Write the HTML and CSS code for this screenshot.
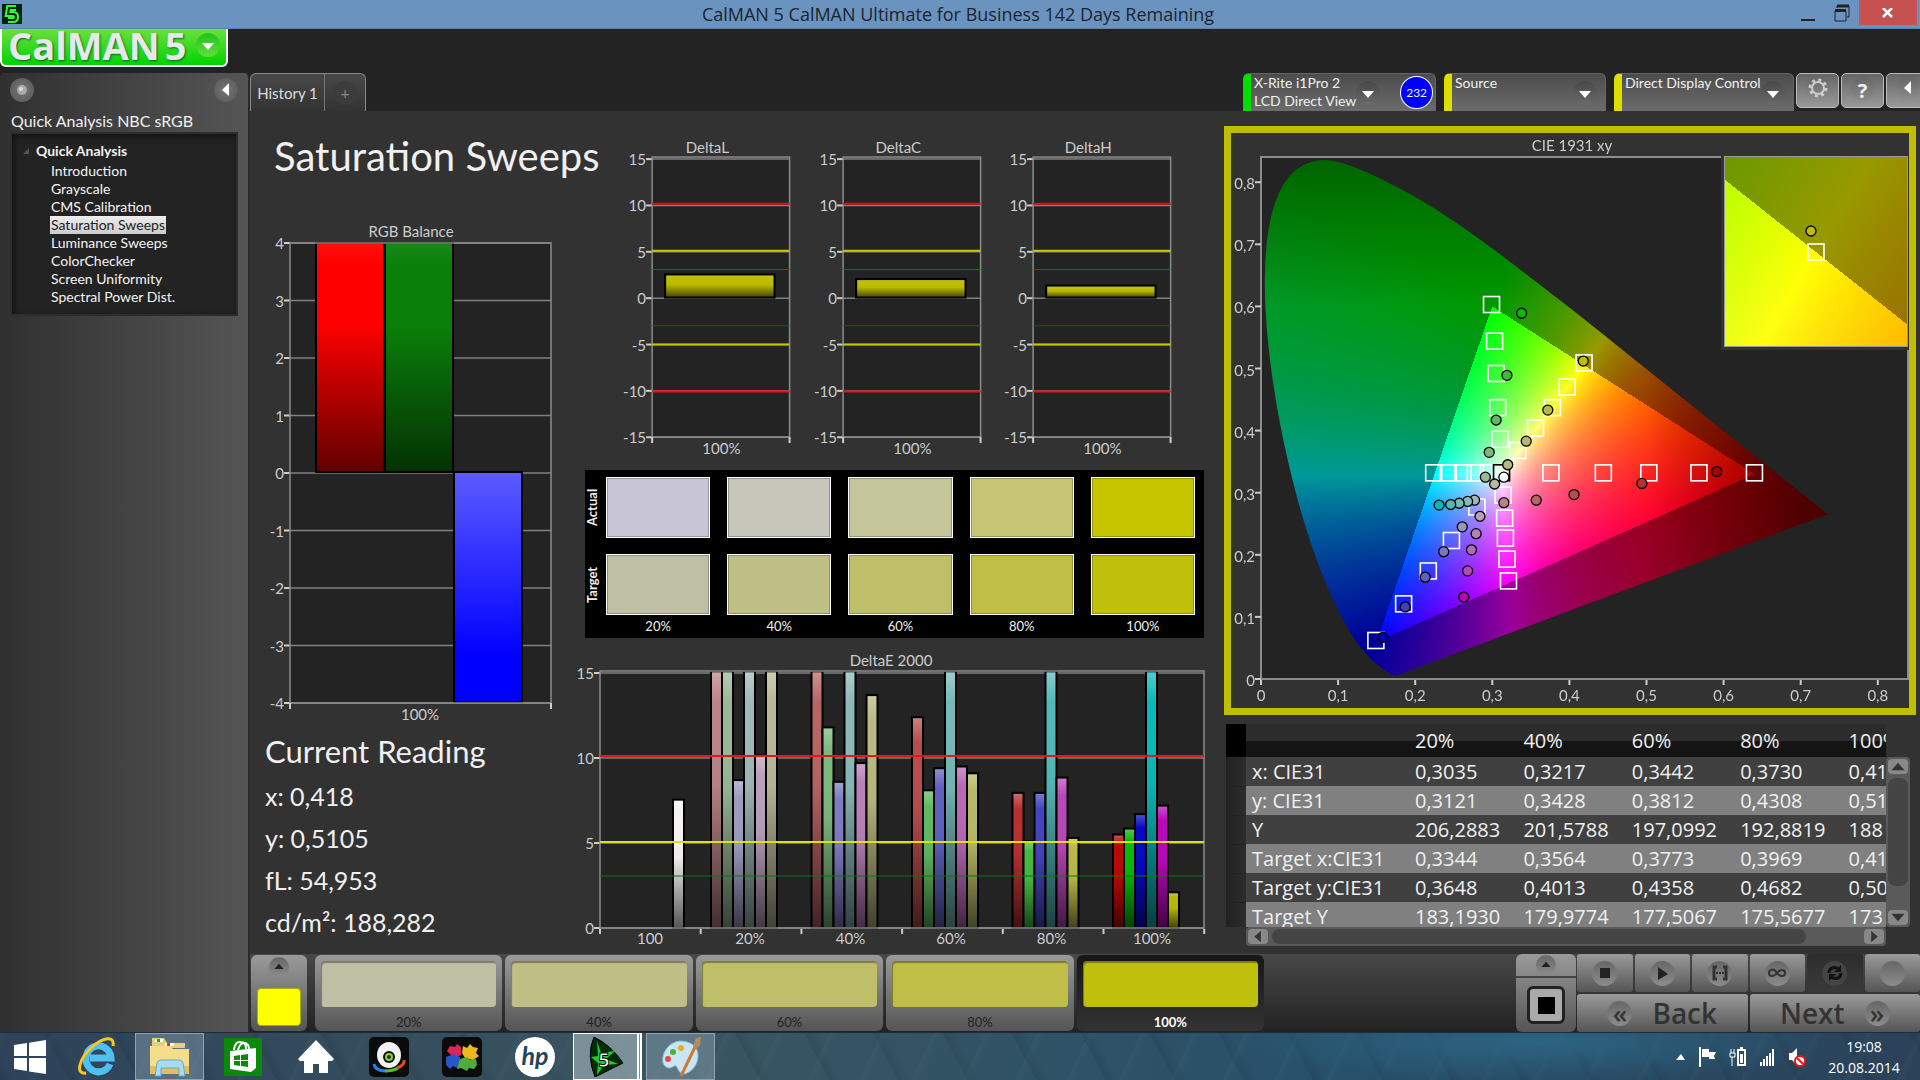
FILE: index.html
```html
<!DOCTYPE html>
<html lang="en">
<head>
    <meta charset="UTF-8">
    <meta name="viewport" content="width=device-width, initial-scale=1.0">
    <title>CalMAN 5</title>
    <link rel="stylesheet" href="styles.css">
</head>
<body>

<header class="titlebar">
    <svg class="app-icon" viewBox="0 0 20 20"><rect width="20" height="20" fill="#021"/><path d="M14 4H7L6 10h5q3 0 3 3t-3 3H6" fill="none" stroke="#2dff2d" stroke-width="6"/><path d="M14 4H7L6 10h5q3 0 3 3t-3 3H6" fill="none" stroke="#021" stroke-width="2"/></svg>
    <span class="window-title">CalMAN 5 CalMAN Ultimate for Business 142 Days Remaining</span>
    <div class="window-buttons">
        <button aria-label="Minimize"><svg width="16" height="18" viewBox="0 0 16 18"><path d="M1 16h14" stroke="#222" stroke-width="2"/></svg></button>
        <button aria-label="Restore"><svg width="16" height="18" viewBox="0 0 16 18"><path d="M3 4V2h12v11h-2M1 7h11v10H1z" fill="none" stroke="#222"/><path d="M3 2h12M1 6.500h11" stroke="#222" stroke-width="3"/></svg></button>
        <button class="close" aria-label="Close"><svg width="12" height="10" viewBox="0 0 12 10"><path d="M1 0l9 9M10 0L1 9" stroke="#fff" stroke-width="2.500"/></svg></button>
    </div>
</header>

<div class="topbar">
    <button class="logo">CalMAN<span>5</span><i class="round green"><svg viewBox="0 0 24 24"><path d="M6 10h12l-6 7z" fill="#fff"/></svg></i></button>
</div>

<div class="workspace">
    <aside class="sidebar">
        <div class="side-top">
            <button class="round" aria-label="Record"><svg viewBox="0 0 24 24"><circle cx="12" cy="12" r="5" fill="#aaa"/><circle cx="11" cy="11" r="2" fill="#ddd"/></svg></button>
            <button class="round dark" aria-label="Collapse"><svg viewBox="0 0 24 24"><path d="M15 5v13l-7-6z" fill="#fff"/></svg></button>
        </div>
        <h2>Quick Analysis NBC sRGB</h2>
        <nav class="tree">
            <b><svg width="8" height="8" viewBox="0 0 8 8"><path d="M7 1v6H1z" fill="#555"/></svg>Quick Analysis</b>
            <a href="#">Introduction</a>
            <a href="#">Grayscale</a>
            <a href="#">CMS Calibration</a>
            <a href="#" class="active">Saturation Sweeps</a>
            <a href="#">Luminance Sweeps</a>
            <a href="#">ColorChecker</a>
            <a href="#">Screen Uniformity</a>
            <a href="#">Spectral Power Dist.</a>
        </nav>
    </aside>

    <div class="content">
        <div class="tabrow">
            <div class="tabs">
                <button>History 1</button>
                <button aria-label="New tab"><i class="round dark">+</i></button>
            </div>
            <div class="devices">
                <div class="device meter">
                    <button>X-Rite i1Pro 2<br>LCD Direct View</button>
                    <i class="round dark"><svg viewBox="0 0 24 24"><path d="M6 10h12l-6 7z" fill="#fff"/></svg></i>
                    <span class="count">232</span>
                </div>
                <div class="device source">
                    <button>Source</button>
                    <i class="round dark"><svg viewBox="0 0 24 24"><path d="M6 10h12l-6 7z" fill="#fff"/></svg></i>
                </div>
                <div class="device display">
                    <button>Direct Display Control</button>
                    <i class="round dark"><svg viewBox="0 0 24 24"><path d="M6 10h12l-6 7z" fill="#fff"/></svg></i>
                </div>
                <div class="tools">
                    <button aria-label="Settings"><i class="round"><svg viewBox="0 0 24 24"><circle cx="12" cy="12" r="8" fill="none" stroke="#ccc" stroke-width="3" stroke-dasharray="3 3.280"/><circle cx="12" cy="12" r="6" fill="none" stroke="#ccc" stroke-width="2"/></svg></i></button>
                    <button aria-label="Help"><i class="round">?</i></button>
                    <button aria-label="Expand"><i class="round"><svg viewBox="0 0 24 24"><path d="M15 5v13l-7-6z" fill="#fff"/></svg></i></button>
                </div>
            </div>
        </div>

        <main class="panels">
            <section class="col-left">
                <h1>Saturation Sweeps</h1>
                <svg id="rgb" class="chart" viewBox="0 0 327 507"></svg>
                <div class="reading">
                    <h2>Current Reading</h2>
                    <p>x: 0,418</p>
                    <p>y: 0,5105</p>
                    <p>fL: 54,953</p>
                    <p>cd/m²: 188,282</p>
                </div>
            </section>

            <section class="col-mid">
                <div class="deltas">
                    <svg id="deltaL" class="chart" viewBox="0 0 190 325"></svg>
                    <svg id="deltaC" class="chart" viewBox="0 0 190 325"></svg>
                    <svg id="deltaH" class="chart" viewBox="0 0 190 325"></svg>
                </div>
                <div class="swatches">
                    <span class="side">Actual</span>
                    <i class="a20"></i><i class="a40"></i><i class="a60"></i><i class="a80"></i><i class="a100"></i>
                    <span class="side">Target</span>
                    <i class="t20"></i><i class="t40"></i><i class="t60"></i><i class="t80"></i><i class="t100"></i>
                    <span></span>
                    <span>20%</span><span>40%</span><span>60%</span><span>80%</span><span>100%</span>
                </div>
                <svg id="deltaE" class="chart" viewBox="0 0 635 300"></svg>
            </section>

            <section class="col-right">
                <div class="cie"><svg id="cie" class="chart" viewBox="0 0 678 575"></svg></div>
                <div class="grid">
                    <div class="table-wrap">
                        <table>
                            <colgroup><col class="c-head"><col class="c-name"><col><col><col><col><col></colgroup>
                            <thead>
                                <tr><th></th><th></th><th>20%</th><th>40%</th><th>60%</th><th>80%</th><th>100%</th></tr>
                            </thead>
                            <tbody>
                                <tr><th></th><td>x: CIE31</td><td>0,3035</td><td>0,3217</td><td>0,3442</td><td>0,3730</td><td>0,41</td></tr>
                                <tr><th></th><td>y: CIE31</td><td>0,3121</td><td>0,3428</td><td>0,3812</td><td>0,4308</td><td>0,51</td></tr>
                                <tr><th></th><td>Y</td><td>206,2883</td><td>201,5788</td><td>197,0992</td><td>192,8819</td><td>188</td></tr>
                                <tr><th></th><td>Target x:CIE31</td><td>0,3344</td><td>0,3564</td><td>0,3773</td><td>0,3969</td><td>0,41</td></tr>
                                <tr><th></th><td>Target y:CIE31</td><td>0,3648</td><td>0,4013</td><td>0,4358</td><td>0,4682</td><td>0,50</td></tr>
                                <tr><th></th><td>Target Y</td><td>183,1930</td><td>179,9774</td><td>177,5067</td><td>175,5677</td><td>173</td></tr>
                            </tbody>
                        </table>
                    </div>
                    <div class="vscroll"><button aria-label="Up"><svg viewBox="0 0 20 16"><path d="M3 12h14l-7-8z"/></svg></button><i></i><button aria-label="Down"><svg viewBox="0 0 20 16"><path d="M3 4h14l-7 8z"/></svg></button></div>
                    <div class="hscroll"><button aria-label="Left"><svg viewBox="0 0 20 16"><path d="M13 2v12L6 8z"/></svg></button><i></i><button aria-label="Right"><svg viewBox="0 0 20 16"><path d="M7 2v12l7-6z"/></svg></button></div>
                </div>
            </section>
        </main>

        <footer class="strip">
            <button class="current" aria-label="Pattern"><i class="round"><svg viewBox="0 0 24 24"><path d="M5 15h14l-7-8z" fill="#222"/></svg></i><span class="patch"></span></button>
            <div class="levels">
                <button><i class="t20"></i>20%</button>
                <button><i class="t40"></i>40%</button>
                <button><i class="t60"></i>60%</button>
                <button><i class="t80"></i>80%</button>
                <button class="on"><i class="t100"></i>100%</button>
            </div>
            <div class="window-pat">
                <button aria-label="More"><i class="round"><svg viewBox="0 0 24 24"><path d="M5 15h14l-7-8z" fill="#222"/></svg></i></button>
                <button aria-label="Window pattern"><span></span></button>
            </div>
            <div class="transport">
                <button aria-label="Stop"><i class="round"><svg viewBox="0 0 24 24"><path d="M7 7h10v10H7z" fill="#222"/></svg></i></button>
                <button aria-label="Play"><i class="round"><svg viewBox="0 0 24 24"><path d="M8 6v13l10-6z" fill="#222"/></svg></i></button>
                <button aria-label="Series"><i class="round"><svg viewBox="0 0 24 24"><path d="M9 6H6v12h3M15 6h3v12h-3" fill="none" stroke="#333" stroke-width="3"/><path d="M8 12h8" stroke="#333" stroke-width="2" stroke-dasharray="2 1"/></svg></i></button>
                <button aria-label="Continuous"><i class="round"><svg viewBox="0 0 24 24"><path d="M12 12c-3-5-8-4-8 0s5 4 8 0 8-4 8 0-5 4-8 0z" fill="none" stroke="#333" stroke-width="2"/></svg></i></button>
                <button class="off" aria-label="Repeat"><i class="round"><svg viewBox="0 0 24 24"><path d="M6 12c0-5 5-7 10-4M18 12c0 5-5 7-10 4" fill="none" stroke="#111" stroke-width="3"/><path d="M18 4v7h-7zM6 20v-7h7z" fill="#111"/></svg></i></button>
                <button aria-label="Record"><i class="round"></i></button>
                <button class="wide"><i class="round">«</i>Back</button>
                <button class="wide">Next<i class="round">»</i></button>
            </div>
        </footer>
    </div>
</div>

<div class="taskbar">
    <button aria-label="Start"><svg width="34" height="36" viewBox="0 0 34 36"><path d="M1 6l13-2v13H1zM16 3.700L33 1v16H16zM1 19h13v13L1 30zM16 19h17v16l-17-2.500z" fill="#fff"/></svg></button>
    <button aria-label="Internet Explorer"><svg width="40" height="40" viewBox="0 0 40 40"><path d="M33 27A12.500 13 0 1 1 34 21H13" fill="none" stroke="#4fc0f2" stroke-width="7"/><path d="M9 36C-2 38 2 22 14 11S38-2 36 9" fill="none" stroke="#f8c81e" stroke-width="3"/></svg></button>
    <button class="open" aria-label="Explorer"><svg width="42" height="42" viewBox="0 0 42 42"><path d="M3 2h12l3 5h18v5H3z" fill="#e8cf78"/><path d="M6 3h8v3H6z" fill="#fff"/><path d="M8 3h3v3H8z" fill="#2a9a4a"/><path d="M16 7h9v3h-9z" fill="#fff"/><path d="M18 7h3v3h-3z" fill="#d33"/><path d="M1 10h20l3 3h16v25H1z" fill="#f5dd8c"/><path d="M1 30h39v8H1z" fill="#e2c060"/><path d="M6 40l2-13q1-3 4-3h18q3 0 4 3l2 13h-6v-8H12v8z" fill="#a8dcf2" stroke="#5fa9cf"/></svg></button>
    <button aria-label="Store"><svg width="38" height="38" viewBox="0 0 38 38"><path d="M0 0h38v38H0z" fill="#0a8a0a"/><path d="M6 13l26-3v20l-5 4-21-3z" fill="#fff"/><path d="M10 12q1-9 7-8 5 0 5 7M14 12q2-8 7-7 4 1 4 6" fill="none" stroke="#fff" stroke-width="2"/><path d="M10 18l6-1v5h-6zM17 17l7-1v6h-7zM10 23h6v5l-6-1zM17 23h7v6l-7-1z" fill="#0a8a0a"/></svg></button>
    <button aria-label="Home"><svg width="38" height="36" viewBox="0 0 38 36"><path d="M19 1L1 20l2 2h4v12h9V25h6v9h9V22h4l2-2z" fill="#fff"/></svg></button>
    <button aria-label="Camera"><svg width="40" height="40" viewBox="0 0 40 40"><rect width="40" height="40" rx="5" fill="#0b0b0b"/><path d="M5 27q1 7 12 7" fill="none" stroke="#2d7fe8" stroke-width="3"/><path d="M16 34q8 0 13-3" fill="none" stroke="#56c02d" stroke-width="3"/><path d="M28 31q8-3 7-8" fill="none" stroke="#e84a20" stroke-width="3"/><ellipse cx="20" cy="18" rx="12" ry="13" fill="#f2f2f2"/><circle cx="20" cy="20" r="6" fill="#111"/><circle cx="20" cy="20" r="4" fill="#82d82d"/><circle cx="20" cy="20" r="2" fill="#232"/></svg></button>
    <button aria-label="Puzzle"><svg width="40" height="40" viewBox="0 0 40 40"><rect width="40" height="40" rx="5" fill="#0b0b0b"/><path d="M8 9l5 1 2-3 4 3v8l-4 2-6-2-4-4z" fill="#e0245a"/><path d="M21 9l4 2 3-4 3 3 5 1-2 5 3 3-6 4-8-2-3-5z" fill="#f0b81e"/><path d="M4 20l8-3 6 3v8l-3 3-4-2-3 3-4-4z" fill="#2a55c8"/><path d="M18 22l7-2 3 3 6-1 1 6-3 4-5-1-2 3-6-3-4 1z" fill="#4fae3a"/></svg></button>
    <button aria-label="HP"><svg width="40" height="40" viewBox="0 0 40 40"><circle cx="20" cy="20" r="20" fill="#fff"/><text class="hp" x="20" y="28">hp</text></svg></button>
    <button class="open bright" aria-label="CalMAN"><svg width="38" height="40" viewBox="0 0 38 40"><path d="M7 0Q-1 18 8 40L36 26Q24 8 7 0z" fill="#022b06" stroke="#000"/><path d="M10 4l4 12 14-2-9 8 12 5-14 1-7 10 1-12-7-6 7-1z" fill="#19d030"/><text class="five" x="17" y="30">5</text></svg></button>
    <button class="open" aria-label="Paint"><svg width="42" height="42" viewBox="0 0 42 42"><path d="M20 5C8 6 1 18 3 27c2 6 8 6 11 3 4-2 3 7 9 8 8 0 16-10 15-20C37 9 29 5 20 5z" fill="#c9e6f6" stroke="#87b6d2"/><circle cx="8" cy="23" r="3" fill="#e2503a"/><circle cx="13" cy="16" r="3" fill="#4fae3a"/><circle cx="21" cy="12" r="3" fill="#f0a81e"/><path d="M21 40L36 9" stroke="#d07a28" stroke-width="3"/><path d="M33 10l3-8 5-1-1 8-4 4z" fill="#b88a5a"/></svg></button>
    <div class="tray">
        <svg width="12" height="8" viewBox="0 0 12 8"><path d="M1 7h9L6 1z" fill="#fff"/></svg>
        <svg width="18" height="20" viewBox="0 0 18 20"><path d="M1 0v20" stroke="#fff" stroke-width="2"/><path d="M3 2h7v3h7l-2 4 1 3h-6v-2H3z" fill="#fff"/></svg>
        <svg width="18" height="20" viewBox="0 0 18 20"><path d="M9 3h7v15H9zM11 1h3" fill="none" stroke="#fff" stroke-width="2"/><path d="M11 7h3v9h-3z" fill="#fff"/><path d="M1 6h5v4H1zM2 2v4M5 2v4M3 10v9" fill="none" stroke="#fff"/></svg>
        <svg width="16" height="18" viewBox="0 0 16 18"><path d="M2 18v-4M5 18v-7M8 18V8M11 18V5M14 18V1" stroke="#fff" stroke-width="2"/></svg>
        <svg width="20" height="20" viewBox="0 0 20 20"><path d="M2 6h3l5-5v17l-5-5H2z" fill="#fff"/><circle cx="13" cy="14" r="5" fill="#fff" stroke="#e11" stroke-width="2"/><path d="M10 11l6 6" stroke="#e11" stroke-width="2"/></svg>
        <time>19:08<br>20.08.2014</time>
    </div>
</div>

<script src="charts.js"></script>
</body>
</html>
```
FILE: styles.css
```css
* {
    box-sizing: border-box;
}
body {
    margin: 0;
    min-height: 100vh;
    display: flex;
    flex-direction: column;
    background: #232323;
    color: #f0f0f0;
    font-family: Lato, "Liberation Sans", sans-serif;
    font-size: 14px;
    overflow-x: hidden;
}
button {
    font: inherit;
    color: inherit;
    background: none;
    border: 0;
    padding: 0;
    cursor: pointer;
}
svg {
    display: block;
}
h1, h2, p {
    margin: 0;
    font-weight: normal;
}

/* title bar */
.titlebar {
    height: 29px;
    background: #6a93bf;
    border-bottom: 1px solid #5a84b0;
    display: flex;
    align-items: center;
    color: #1c2430;
}
.app-icon {
    width: 20px;
    height: 20px;
    margin-left: 2px;
}
.window-title {
    flex: 1;
    text-align: center;
    padding-left: 103px;
    font-family: "Open Sans", sans-serif;
    font-size: 18px;
}
.window-buttons {
    display: flex;
    align-self: flex-start;
    height: 25px;
    margin-right: 3px;
}
.window-buttons button {
    width: 34px;
    display: grid;
    place-items: center;
}
.window-buttons .close {
    width: 58px;
    background: #c75050;
}

/* logo */
.topbar {
    height: 44px;
}
.logo {
    display: flex;
    align-items: center;
    width: 228px;
    height: 38px;
    padding: 0 6px 4px;
    border: 2px solid #fff;
    border-top: 0;
    border-radius: 0 0 6px 6px;
    background: linear-gradient(#6ce03e, #00d400);
    color: #e8e8e8;
    font: bold 38px/32px "Open Sans", sans-serif;
    text-shadow: 1px 1px 2px #063;
}
.logo span {
    padding-left: 5px;
}
.logo .round {
    margin-left: auto;
}
.round {
    display: inline-grid;
    place-items: center;
    width: 24px;
    height: 24px;
    border-radius: 50%;
    background: linear-gradient(#666, #8c8c8c);
    font-style: normal;
    flex: none;
}
.round svg {
    width: 24px;
    height: 24px;
}
.round.dark {
    background: linear-gradient(#484848, #6a6a6a);
}
.round.green {
    background: linear-gradient(#20c020, #62e03a);
}

/* sidebar */
.workspace {
    flex: 1;
    display: flex;
}
.sidebar {
    width: 250px;
    flex: none;
    padding: 5px 10px;
    border-radius: 5px 5px 0 0;
    background: linear-gradient(90deg, #303030, #555);
    border-right: 2px solid #2a2a2a;
}
.side-top {
    display: flex;
    justify-content: space-between;
}
.side-top .round {
    background: radial-gradient(#777, #555);
}
.sidebar h2 {
    margin: 9px 1px 1px;
    font-size: 16px;
    line-height: 20px;
}
.tree {
    background: #232323;
    border: 2px solid #2d2d2d;
    box-shadow: inset 2px 2px 6px #111;
    padding: 8px;
    height: 184px;
    font-size: 14px;
    line-height: 18px;
}
.tree b {
    display: flex;
    align-items: center;
    gap: 6px;
    padding-left: 2px;
    margin-bottom: 2px;
}
.tree a {
    display: table;
    margin-left: 30px;
    padding: 0 1px;
    color: #f4f4f4;
    text-decoration: none;
}
.tree .active {
    background: linear-gradient(#eee, #ccc);
    color: #222;
}

/* tabs and device bar */
.content {
    flex: 1;
    min-width: 0;
    display: flex;
    flex-direction: column;
}
.tabrow {
    height: 38px;
    display: flex;
    justify-content: space-between;
}
.tabs {
    display: flex;
    border: 1px solid #888;
    border-bottom: 0;
    border-radius: 6px 6px 0 0;
    background: linear-gradient(#484848, #333);
    font-size: 15px;
    color: #ddd;
}
.tabs button {
    width: 73px;
}
.tabs button + button {
    width: 41px;
    border-left: 1px solid #777;
}
.tabs .round {
    background: #3c3c3c;
    color: #888;
}
.devices {
    display: flex;
    margin-right: -9px;
}
.device {
    display: flex;
    align-items: center;
    margin-right: 8px;
    border: 1px solid #666;
    border-bottom: 0;
    border-left: 8px solid #dede00;
    border-radius: 6px 6px 0 0;
    background: linear-gradient(#4c4c4c, #6c6c6c);
    font-size: 14px;
    line-height: 18px;
}
.device button {
    flex: 1;
    align-self: flex-start;
    text-align: left;
    padding-left: 3px;
    white-space: nowrap;
}
.device > .round {
    margin-right: 8px;
}
.meter {
    width: 193px;
    border-left-color: #00e000;
}
.source {
    width: 162px;
}
.display {
    width: 180px;
    margin-right: 2px;
}
.meter > .round {
    margin-right: 12px;
}
.count {
    display: grid;
    place-items: center;
    width: 33px;
    height: 33px;
    margin: 0 2px 0 8px;
    border: 1px solid #fff;
    border-radius: 50%;
    background: #00f;
    font-size: 12px;
}
.tools {
    display: flex;
    gap: 2px;
}
.tools button {
    width: 43px;
    height: 35px;
    border: 1px solid #bbb;
    border-radius: 5px;
    background: linear-gradient(#666, #999);
    font: bold 20px "Open Sans", sans-serif;
}

/* panels */
.panels {
    flex: 1;
    display: grid;
    grid-template-columns: minmax(0, 327fr) minmax(0, 635fr) minmax(0, 704fr);
    align-items: start;
    padding-right: 4px;
    background: #323232;
}
.chart {
    width: 100%;
    height: auto;
}
.chart text {
    font-size: 15px;
    fill: #ccc;
}
.chart .mid {
    text-anchor: middle;
}
.chart .end {
    text-anchor: end;
}
.col-left h1 {
    margin: 13px 0 30px 24px;
    font-size: 40px;
    line-height: 64px;
    white-space: nowrap;
}
.reading {
    padding-left: 15px;
    font-size: 25px;
    line-height: 42px;
}
.reading h2 {
    padding-top: 4px;
    margin-bottom: 2px;
    font-size: 31px;
    line-height: 44px;
}
.deltas {
    display: grid;
    grid-template-columns: repeat(3, 1fr);
    padding: 24px 20px 0 43px;
}
.swatches {
    display: grid;
    grid-template-columns: 4px repeat(5, 1fr);
    grid-template-rows: 61px 61px 20px;
    column-gap: 17px;
    row-gap: 16px;
    margin: 9px 8px 10px;
    padding: 7px 9px 0 0;
    height: 168px;
    background: #000;
    font-size: 13px;
    text-align: center;
    line-height: 1;
}
.swatches i {
    border: 1px solid #fff;
    box-shadow: inset 0 0 0 1px rgba(0, 0, 0, 0.25);
}
.swatches span {
    margin-top: -11px;
}
.swatches .side {
    width: 14px;
    writing-mode: vertical-rl;
    transform: rotate(180deg);
    margin: 0;
    line-height: 14px;
    font-weight: bold;
}
.a20 { background: #c8c6d6; }
.a40 { background: #c6c6ba; }
.a60 { background: #c6c69c; }
.a80 { background: #c6c674; }
.a100 { background: #c6c600; }
.t20 { background: #bfbfa4; }
.t40 { background: #bfbf86; }
.t60 { background: #bfbf6a; }
.t80 { background: #bfbf48; }
.t100 { background: #bfbf0c; }
.col-right {
    padding-top: 15px;
    margin-left: 12px;
}
.cie {
    border: 7px solid #bfbf00;
}

/* readings table */
.grid {
    display: grid;
    grid-template-columns: 20px minmax(0, 1fr) 24px;
    grid-template-rows: 33px 170px 19px;
    margin: 9px 6px 0 2px;
}
.table-wrap {
    grid-column: 1 / 3;
    grid-row: 1 / 3;
    overflow: hidden;
}
table {
    width: 725px;
    table-layout: fixed;
    border-collapse: collapse;
    font-family: "Open Sans", sans-serif;
    font-size: 20px;
}
.c-head { width: 20px; }
.c-name { width: 163px; }
th, td {
    height: 29px;
    padding: 0 0 0 6px;
    line-height: 29px;
    font-weight: normal;
    text-align: left;
    white-space: nowrap;
}
thead th {
    height: 33px;
    background: linear-gradient(#2c2c2c 50%, #141414 50%);
}
thead th:first-child {
    background: #000;
}
tbody tr {
    background: #404040;
}
tbody tr:nth-child(even) {
    background: #808080;
}
tbody th {
    background: linear-gradient(90deg, #222, #2c2c2c);
    border-bottom: 1px solid #222;
}
.vscroll, .hscroll {
    display: flex;
    background: #5a5a5a;
    border-radius: 4px;
    padding: 2px;
    gap: 4px;
}
.vscroll {
    grid-column: 3;
    grid-row: 2;
    flex-direction: column;
}
.hscroll {
    grid-column: 2;
    grid-row: 3;
}
.vscroll i, .hscroll i {
    background: #444;
    border-radius: 8px;
}
.vscroll i {
    height: 108px;
    margin-bottom: auto;
}
.hscroll i {
    width: 84%;
    margin-right: auto;
}
.vscroll button, .hscroll button {
    width: 20px;
    height: 15px;
    border-radius: 4px;
    background: #888;
    fill: #333;
}
.vscroll button svg, .hscroll button svg {
    width: 20px;
    height: 15px;
}

/* bottom strip */
.strip {
    height: 78px;
    display: flex;
    background: linear-gradient(#484848, #222);
    color: #222;
}
.current, .levels button, .window-pat, .transport button {
    background: linear-gradient(#9a9a9a, #555);
    border-radius: 6px;
}
.current {
    width: 56px;
    margin: 1px 8px 1px 1px;
    display: flex;
    flex-direction: column;
    align-items: center;
    justify-content: space-between;
    padding: 2px 0 5px;
}
.strip .round {
    width: 20px;
    height: 20px;
}
.strip .round svg {
    width: 16px;
    height: 16px;
}
.patch {
    width: 44px;
    height: 38px;
    border-radius: 4px;
    background: #ff0;
    border: 1px solid #aa0;
}
.levels {
    display: flex;
    gap: 3px;
    flex: 0 1 949px;
    padding: 1px 0;
}
.levels button {
    flex: 1;
    display: flex;
    flex-direction: column;
    align-items: center;
    padding: 6px 6px 0;
    font-size: 13px;
    line-height: 30px;
}
.levels i {
    width: 100%;
    height: 46px;
    flex: none;
    border-radius: 4px;
    box-shadow: inset 1px 2px 1px rgba(0, 0, 0, 0.35);
}
.levels .on {
    background: linear-gradient(#161616, #333);
    color: #fff;
    font-weight: bold;
}
.window-pat {
    width: 60px;
    margin-left: auto;
    display: flex;
    flex-direction: column;
}
.window-pat button {
    flex: 1;
    display: grid;
    place-items: center;
}
.window-pat button:first-child {
    flex: 0 0 24px;
    border-bottom: 2px solid #444;
}
.window-pat span {
    width: 38px;
    height: 38px;
    border: 3px solid #222;
    border-radius: 6px;
    background: linear-gradient(#000, #000) center / 17px 17px no-repeat, #aaa;
}
.transport {
    width: 343px;
    margin-left: 1px;
    display: grid;
    grid-template-columns: repeat(6, minmax(0, 1fr));
    grid-template-rows: 38px 38px;
    gap: 2px;
}
.transport button {
    display: flex;
    align-items: center;
    justify-content: center;
    border-radius: 3px;
}
.transport .round {
    width: 25px;
    height: 25px;
    font-size: 26px;
    line-height: 20px;
}
.transport .round svg {
    width: 24px;
    height: 24px;
}
.transport .off {
    background: linear-gradient(#2c2c2c, #3a3a3a);
}
.transport .off .round {
    background: #444;
}
.transport .wide {
    grid-column: span 3;
    gap: 20px;
    font: 600 28px "Open Sans", sans-serif;
    color: #333;
}

/* taskbar */
.taskbar {
    height: 48px;
    display: flex;
    align-items: center;
    border-top: 1px solid #1c2c38;
    background:
        radial-gradient(ellipse 300px 40px at 80% 20%, #2c6482, transparent),
        repeating-linear-gradient(115deg, rgba(110, 160, 180, 0.05) 0 2px, transparent 8px 47px),
        repeating-linear-gradient(62deg, rgba(10, 25, 40, 0.1) 0 3px, transparent 12px 61px),
        linear-gradient(90deg, #2e4259, #3a5560 35%, #27506a 70%, #2b4259);
}
.taskbar button {
    width: 69px;
    height: 47px;
    margin-right: 4px;
    display: grid;
    place-items: center;
}
.taskbar button:first-child {
    width: 60px;
    margin-right: 2px;
}
.taskbar .open {
    background: rgba(150, 175, 190, 0.4);
    border: 1px solid #8fa3b0;
}
.taskbar .bright {
    background: rgba(190, 205, 210, 0.5);
    border: 1px solid #fff;
    border-right: 5px double #fff;
}
.hp {
    font: italic bold 25px Lato, sans-serif;
    text-anchor: middle;
    fill: #24465c;
}
.five {
    font: bold 20px "Open Sans", sans-serif;
    text-anchor: middle;
    fill: #fff;
    stroke: #000;
}
.tray {
    margin-left: auto;
    margin-right: 18px;
    display: flex;
    align-items: center;
    gap: 12px;
}
.tray time {
    width: 76px;
    margin-left: 7px;
    font: 14px/21px "Open Sans", sans-serif;
    text-align: center;
    color: #fff;
}
```
FILE: charts.js
```javascript
const NS = 'http://www.w3.org/2000/svg';

function add(parent, tag, attrs, text) {
    const node = document.createElementNS(NS, tag);
    for (const key in attrs) node.setAttribute(key, attrs[key]);
    if (text !== undefined) node.textContent = text;
    parent.appendChild(node);
    return node;
}

function line(svg, x1, y1, x2, y2, stroke, width) {
    add(svg, 'line', { x1, y1, x2, y2, stroke, 'stroke-width': width || 1 });
}

// shared shading gradients for the bars
function shades(svg) {
    const defs = add(svg, 'defs', {});
    const stops = {
        up: [[0, '#fff', 0.3], [0.12, '#fff', 0], [0.45, '#000', 0.03], [1, '#000', 0.65]],
        tall: [[0, '#fff', 0.06], [0.1, '#fff', 0], [0.35, '#000', 0], [1, '#000', 0.62]],
        down: [[0, '#fff', 0.36], [0.8, '#fff', 0], [1, '#fff', 0]]
    };
    for (const name in stops) {
        const g = add(defs, 'linearGradient', { id: svg.id + name, x1: 0, y1: 0, x2: 0, y2: 1 });
        stops[name].forEach(s => add(g, 'stop', { offset: s[0], 'stop-color': s[1], 'stop-opacity': s[2] }));
    }
}

function bar(svg, x, y, width, height, fill, shade) {
    add(svg, 'rect', { x, y, width, height, fill });
    add(svg, 'rect', { x, y, width, height, fill: `url(#${svg.id}${shade})`, stroke: '#000', 'stroke-width': 2 });
}

function plot(svg, o) {
    add(svg, 'rect', { x: o.left, y: o.top, width: o.right - o.left, height: o.bottom - o.top, fill: '#232323' });
    o.ticks.forEach((t, i) => {
        const y = o.first + i * o.step;
        line(svg, o.left, y, o.right, y, '#808080', 1.5);
        line(svg, o.left - 6, y, o.left, y, '#ccc', 2);
        add(svg, 'text', { x: o.left - 6, y: y + 6, class: 'end' }, t);
    });
    add(svg, 'text', { x: o.titleX, y: o.titleY, class: 'mid' }, o.title);
}

function frame(svg, o) {
    add(svg, 'rect', { x: o.left, y: o.top, width: o.right - o.left, height: o.bottom - o.top, fill: 'none', stroke: '#8c8c8c', 'stroke-width': 1.5 });
}

// RGB balance
function drawRgb() {
    const svg = document.getElementById('rgb');
    const o = { left: 40, right: 301, top: 25, bottom: 485, first: 25, step: 57.5, ticks: [4, 3, 2, 1, 0, -1, -2, -3, -4], title: 'RGB Balance', titleX: 161, titleY: 19 };
    shades(svg);
    plot(svg, o);
    bar(svg, 66, 25, 68, 229, '#f00', 'tall');
    bar(svg, 135, 25, 68, 229, '#0a800a', 'tall');
    bar(svg, 204, 254, 68, 230, '#00f', 'down');
    frame(svg, o);
    line(svg, 40, 485, 40, 491, '#ccc', 2);
    line(svg, 301, 485, 301, 491, '#ccc', 2);
    add(svg, 'text', { x: 170, y: 502, class: 'mid' }, '100%');
}

// DeltaL, DeltaC, DeltaH
function drawDelta(id, value) {
    const svg = document.getElementById(id);
    const o = { left: 32, right: 169, top: 22, bottom: 301, first: 24, step: 46.2, ticks: [15, 10, 5, 0, -5, -10, -15], title: id[0].toUpperCase() + id.slice(1), titleX: 87, titleY: 18 };
    shades(svg);
    plot(svg, o);
    frame(svg, o);
    const h = value * 9.2;
    bar(svg, 45, 162 - h, 109, h, '#bfbf00', 'up');
    [[10, '#e01010', 2], [5, '#c8c800', 2], [3, '#087808', 1], [-3, '#106010', 1], [-5, '#c8c800', 2], [-10, '#f01010', 2]].forEach(l => {
        const y = 162 - l[0] * 9.35;
        line(svg, 32, y, 169, y, l[1], l[2]);
    });
    line(svg, 32, 301, 32, 307, '#ccc', 2);
    line(svg, 169, 301, 169, 307, '#ccc', 2);
    add(svg, 'text', { x: 101, y: 318, class: 'mid' }, '100%');
}

// DeltaE 2000, six colours at each saturation level
function drawDeltaE() {
    const svg = document.getElementById('deltaE');
    const o = { left: 23, right: 627, top: 23, bottom: 280, first: 25, step: 85, ticks: [15, 10, 5, 0], title: 'DeltaE 2000', titleX: 314, titleY: 18 };
    const over = 15.1;
    const groups = [
        ['20%', [over, over, 8.7, over, 10.15, over], ['#b88488', '#98b898', '#9c9cc0', '#a0b8b8', '#b8a0b8', '#b8b898']],
        ['40%', [over, 11.8, 8.6, over, 9.7, 13.7], ['#b86464', '#7cb87c', '#7c7cc0', '#8cb8b8', '#b880b8', '#b8b880']],
        ['60%', [12.4, 8.1, 9.4, over, 9.5, 9.1], ['#b84c4c', '#60b860', '#6060c0', '#74b8b8', '#b868b8', '#b8b868']],
        ['80%', [7.95, 5.1, 7.95, over, 8.85, 5.3], ['#b83030', '#44b844', '#4444c0', '#54b8b8', '#b848b8', '#b8b848']],
        ['100%', [5.5, 5.85, 6.7, over, 7.2, 2.1], ['#b80808', '#08b808', '#0808c0', '#08b8b8', '#b808b8', '#b8b808']]
    ];
    shades(svg);
    plot(svg, o);
    bar(svg, 96, 280 - 7.55 * 17, 11, 7.55 * 17, '#f4f2f2', 'up');
    add(svg, 'text', { x: 73, y: 296, class: 'mid' }, '100');
    groups.forEach((g, i) => {
        const start = 123 + i * 100.5;
        g[1].forEach((v, n) => bar(svg, start + 11 + n * 11, 280 - v * 17, 11, v * 17, g[2][n], 'up'));
        add(svg, 'text', { x: start + 50, y: 296, class: 'mid' }, g[0]);
    });
    frame(svg, o);
    line(svg, 23, 108, 627, 108, '#e01818', 2);
    line(svg, 23, 194, 627, 194, '#e0e010', 2);
    line(svg, 23, 228, 627, 228, '#0a780a', 1);
    for (let i = 0; i < 7; i++) line(svg, 23 + i * 100.7, 281, 23 + i * 100.7, 286, '#ccc', 2);
}

// CIE 1931 diagram
const LOCUS = [[.1741, .005], [.1714, .0051], [.1644, .0109], [.1566, .0177], [.144, .0297], [.1241, .0578], [.1096, .0868], [.0913, .1327], [.0687, .2007], [.0454, .295], [.0235, .4127], [.0082, .5384], [.0034, .6548], [.0115, .7502], [.035, .815], [.0743, .8395], [.1142, .829], [.1547, .8059], [.1929, .7816], [.2296, .7543], [.2658, .7243], [.3016, .6923], [.3731, .6245], [.4441, .5547], [.5125, .4866], [.5752, .4242], [.627, .3725], [.6915, .3083], [.7347, .2653]];

function xyColor(x, y) {
    const z = 1 - x - y;
    let r = 3.2406 * x - 1.5372 * y - 0.4986 * z;
    let g = -0.9689 * x + 1.8758 * y + 0.0415 * z;
    let b = 0.0557 * x - 0.204 * y + 1.057 * z;
    const inside = r >= 0 && g >= 0 && b >= 0;
    r = Math.max(r, 0);
    g = Math.max(g, 0);
    b = Math.max(b, 0);
    let k = (inside ? 255 : 153) / Math.max(r, g, b);
    if (x > 0.5) k *= 1 - Math.min(0.5, (x - 0.5) * 2.4);
    if (y > 0.6) k *= 1 - (y - 0.6) * 1.45;
    return [r * k, g * k, b * k];
}

function field(svg, left, top, width, height, toXY, outline) {
    const holder = add(svg, 'foreignObject', { x: left, y: top, width, height });
    const canvas = document.createElement('canvas');
    const layer = document.createElement('canvas');
    canvas.width = layer.width = width;
    canvas.height = layer.height = height;
    canvas.style.display = 'block';
    const pen = layer.getContext('2d');
    const image = pen.createImageData(width, height);
    for (let j = 0; j < height; j++) {
        for (let i = 0; i < width; i++) {
            const p = toXY(left + i + 0.5, top + j + 0.5);
            const c = xyColor(p[0], p[1]);
            const at = (j * width + i) * 4;
            image.data[at] = c[0];
            image.data[at + 1] = c[1];
            image.data[at + 2] = c[2];
            image.data[at + 3] = 255;
        }
    }
    pen.putImageData(image, 0, 0);
    const ctx = canvas.getContext('2d');
    if (outline) {
        const pts = outline.map(p => [p[0] - left, p[1] - top]);
        ctx.beginPath();
        ctx.moveTo(pts[0][0], pts[0][1]);
        for (let i = 1; i < pts.length - 1; i++) {
            ctx.quadraticCurveTo(pts[i][0], pts[i][1], (pts[i][0] + pts[i + 1][0]) / 2, (pts[i][1] + pts[i + 1][1]) / 2);
        }
        ctx.lineTo(pts[pts.length - 1][0], pts[pts.length - 1][1]);
        ctx.closePath();
        ctx.clip();
    }
    ctx.drawImage(layer, 0, 0);
    holder.appendChild(canvas);
}

function drawCie() {
    const svg = document.getElementById('cie');
    const X = x => 30 + x * 771;
    const Y = y => 546 - y * 621;
    const square = (x, y, stroke) => add(svg, 'rect', { x: x - 8, y: y - 8, width: 16, height: 16, fill: 'none', stroke, 'stroke-width': 1.6 });
    const dot = (x, y, fill) => add(svg, 'circle', { cx: x, cy: y, r: 5, fill, stroke: '#000', 'stroke-width': 1.3 });

    add(svg, 'rect', { x: 30, y: 24, width: 647, height: 522, fill: '#232323', stroke: '#8c8c8c', 'stroke-width': 2 });
    field(svg, 31, 25, 640, 520, (px, py) => [(px - 30) / 771, (546 - py) / 621], LOCUS.map(p => [X(p[0]), Y(p[1])]));

    for (let i = 0; i <= 8; i++) {
        const label = i ? '0,' + i : '0';
        line(svg, X(i / 10), 547, X(i / 10), 552, '#ccc', 2);
        line(svg, 24, Y(i / 10), 30, Y(i / 10), '#ccc', 2);
        add(svg, 'text', { x: X(i / 10), y: 568, class: 'mid' }, label);
        add(svg, 'text', { x: 24, y: Y(i / 10) + 7, class: 'end' }, label);
    }
    add(svg, 'text', { x: 341, y: 18, class: 'mid' }, 'CIE 1931 xy');

    const targets = [
        [.299, .603], [.303, .544], [.305, .492], [.307, .437], [.31, .386],
        [.419, .509], [.397, .47], [.378, .437], [.356, .404], [.333, .368],
        [.64, .332], [.568, .332], [.503, .332], [.444, .332], [.376, .332],
        [.224, .332], [.243, .332], [.262, .332], [.278, .332], [.295, .332],
        [.321, .158], [.319, .193], [.317, .227], [.316, .259], [.314, .296],
        [.149, .062], [.185, .121], [.217, .174], [.247, .223], [.28, .277]
    ];
    targets.forEach(p => square(X(p[0]), Y(p[1]), '#fff'));
    square(X(.312), Y(.332), '#000');

    const measured = [
        [.338, .589, '#00bf00'], [.319, .489, '#40b840'], [.305, .417, '#60b860'], [.296, .365, '#80b880'], [.291, .325, '#98b898'],
        [.418, .512, '#bfbf00'], [.372, .433, '#b8b848'], [.344, .383, '#b8b868'], [.32, .345, '#b8b880'], [.303, .314, '#b8b8a0'],
        [.591, .334, '#a80000'], [.494, .315, '#b83030'], [.406, .297, '#b84c4c'], [.357, .288, '#b86464'], [.315, .284, '#b88484'],
        [.315, .325, '#fff'],
        [.277, .288, '#a0b8b8'], [.268, .286, '#8cb8b8'], [.257, .283, '#74b8b8'], [.246, .281, '#54b8b8'], [.231, .28, '#00b8b8'],
        [.263, .132, '#b800b8'], [.268, .174, '#b848b8'], [.273, .208, '#b868b8'], [.279, .234, '#b880b8'], [.284, .262, '#b8a0b8'],
        [.158, .067, '#0000b0'], [.187, .116, '#4040b8'], [.213, .164, '#6060b8'], [.237, .205, '#7878b8'], [.261, .245, '#9898b8']
    ];
    measured.forEach(p => dot(X(p[0]), Y(p[1]), p[2]));

    // close-up of the 100% yellow point
    add(svg, 'rect', { x: 490, y: 20, width: 188, height: 197, fill: '#323232' });
    field(svg, 494, 24, 183, 190, (px, py) => [.4193 + (px - 585) / 4000, .5053 - (py - 119) / 4000]);
    add(svg, 'rect', { x: 493.5, y: 23.5, width: 183, height: 190, fill: 'none', stroke: '#999' });
    square(585, 119, '#fff');
    dot(580, 98, '#bfbf00');
}

drawRgb();
drawDelta('deltaL', 2.5);
drawDelta('deltaC', 2);
drawDelta('deltaH', 1.3);
drawDeltaE();
drawCie();
```
